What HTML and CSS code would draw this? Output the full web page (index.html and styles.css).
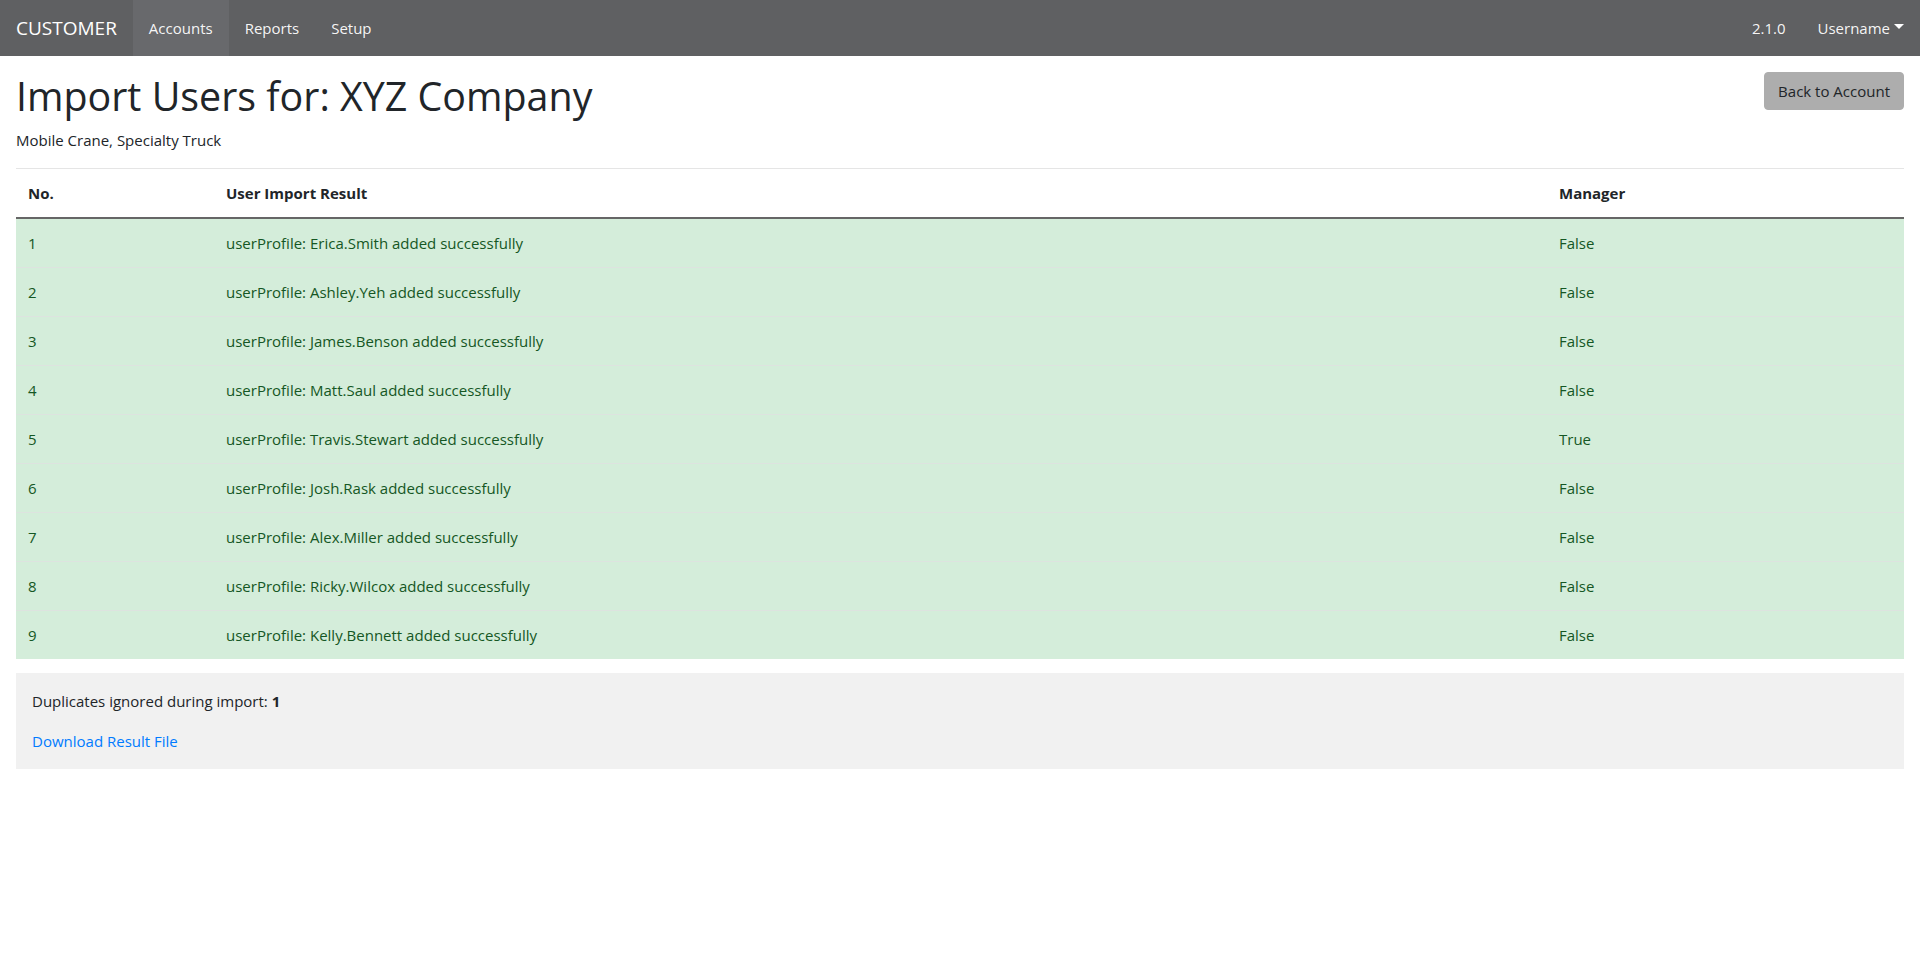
FILE: index.html
```html
<!DOCTYPE html>
<html lang="en">
<head>
<meta charset="utf-8">
<title>Import Users</title>
<link rel="stylesheet" href="styles.css">
</head>
<body>
<nav class="navbar">
  <a class="brand" href="#">CUSTOMER</a>
  <ul class="nav-links">
    <li><a class="nav-link active" href="#">Accounts</a></li>
    <li><a class="nav-link" href="#">Reports</a></li>
    <li><a class="nav-link" href="#">Setup</a></li>
  </ul>
  <div class="nav-right">
    <span class="nav-link version">2.1.0</span>
    <a class="nav-link dropdown" href="#">Username<span class="caret"></span></a>
  </div>
</nav>
<main class="container">
  <div class="page-head">
    <div class="titles">
      <h1>Import Users for: XYZ Company</h1>
      <p class="subtitle">Mobile Crane, Specialty Truck</p>
    </div>
    <a class="btn" href="#">Back to Account</a>
  </div>
  <hr class="divider">
  <table class="results">
    <thead>
      <tr><th class="col-no">No.</th><th>User Import Result</th><th class="col-mgr">Manager</th></tr>
    </thead>
    <tbody>
      <tr><td>1</td><td>userProfile: Erica.Smith added successfully</td><td>False</td></tr>
      <tr><td>2</td><td>userProfile: Ashley.Yeh added successfully</td><td>False</td></tr>
      <tr><td>3</td><td>userProfile: James.Benson added successfully</td><td>False</td></tr>
      <tr><td>4</td><td>userProfile: Matt.Saul added successfully</td><td>False</td></tr>
      <tr><td>5</td><td>userProfile: Travis.Stewart added successfully</td><td>True</td></tr>
      <tr><td>6</td><td>userProfile: Josh.Rask added successfully</td><td>False</td></tr>
      <tr><td>7</td><td>userProfile: Alex.Miller added successfully</td><td>False</td></tr>
      <tr><td>8</td><td>userProfile: Ricky.Wilcox added successfully</td><td>False</td></tr>
      <tr><td>9</td><td>userProfile: Kelly.Bennett added successfully</td><td>False</td></tr>
    </tbody>
  </table>
  <div class="summary">
    <p>Duplicates ignored during import: <strong>1</strong></p>
    <a class="link" href="#">Download Result File</a>
  </div>
</main>
</body>
</html>
```
FILE: styles.css
```css
* { box-sizing: border-box; }
html, body { margin: 0; padding: 0; }
body {
  font-family: "Open Sans", "Noto Sans", sans-serif;
  font-size: 15px;
  line-height: 24px;
  color: #212529;
  background: #fff;
}
a { text-decoration: none; }

.navbar {
  display: flex;
  align-items: center;
  height: 56px;
  padding: 0 16px;
  background: #5f6062;
}
.brand {
  color: #fff;
  font-size: 19px;
  line-height: 30px;
  margin-right: 16px;
}
.nav-links {
  display: flex;
  list-style: none;
  margin: 0;
  padding: 0;
  height: 56px;
}
.nav-link {
  display: flex;
  align-items: center;
  height: 56px;
  padding: 0 16px;
  color: rgba(255,255,255,0.95);
  font-size: 15px;
}
.nav-link.active { background: #68696c; }
.nav-right {
  margin-left: auto;
  display: flex;
  align-items: center;
}
.nav-link.dropdown { padding-right: 0; }
.caret {
  display: inline-block;
  margin-left: 4px;
  border-top: 5px solid #fff;
  border-left: 5px solid transparent;
  border-right: 5px solid transparent;
  position: relative;
  top: -2px;
}

.container { padding: 16px 16px 0; }
.page-head {
  display: flex;
  justify-content: space-between;
  align-items: flex-start;
}
h1 {
  margin: 0 0 8px;
  font-size: 39.4px;
  font-weight: 500;
  line-height: 48px;
}
.subtitle { margin: 0; }
.btn {
  display: inline-block;
  background: #adadad;
  color: #212529;
  padding: 6px 13px;
  line-height: 24px;
  border-radius: 4px;
  border: 1px solid #adadad;
}
.divider {
  margin: 16px 0 0;
  border: 0;
  border-top: 1px solid #e5e5e5;
}

.results {
  width: 100%;
  border-collapse: collapse;
  margin-bottom: 14px;
}
.results th, .results td {
  padding: 12px;
  text-align: left;
  vertical-align: top;
}
.results th {
  font-weight: 700;
  border-bottom: 2px solid #666;
}
.col-no { width: 198px; }
.col-mgr { width: 357px; }
.results tbody tr { background: #d4edda; }
.results td {
  color: #155724;
  border-top: 1px solid #dde3df;
}
.results tbody tr:first-child td { border-top: 0; }

.summary {
  background: #f1f1f1;
  padding: 16px;
}
.summary p { margin: 0 0 16px; }
.link { color: #007bff; }
```
